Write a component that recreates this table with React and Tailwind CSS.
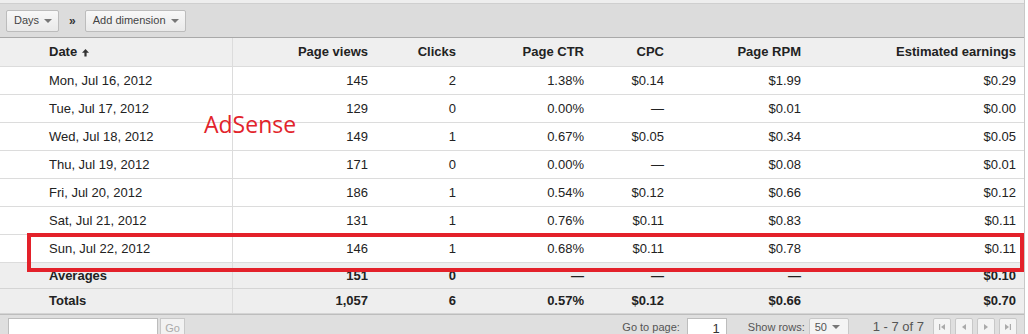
import { useState } from 'react';

const rows = [
  ['Mon, Jul 16, 2012', '145', '2', '1.38%', '$0.14', '$1.99', '$0.29'],
  ['Tue, Jul 17, 2012', '129', '0', '0.00%', '—', '$0.01', '$0.00'],
  ['Wed, Jul 18, 2012', '149', '1', '0.67%', '$0.05', '$0.34', '$0.05'],
  ['Thu, Jul 19, 2012', '171', '0', '0.00%', '—', '$0.08', '$0.01'],
  ['Fri, Jul 20, 2012', '186', '1', '0.54%', '$0.12', '$0.66', '$0.12'],
  ['Sat, Jul 21, 2012', '131', '1', '0.76%', '$0.11', '$0.83', '$0.11'],
  ['Sun, Jul 22, 2012', '146', '1', '0.68%', '$0.11', '$0.78', '$0.11'],
];

const summary = [
  ['Averages', '151', '0', '—', '—', '—', '$0.10', 'h-[26px]'],
  ['Totals', '1,057', '6', '0.57%', '$0.12', '$0.66', '$0.70', 'h-[25px]'],
];

const cols = 'grid grid-cols-[233px_143px_88px_128px_80px_137px_215px]';

function Caret() {
  return <span className="inline-block ml-[5px] w-0 h-0 border-l-[4px] border-r-[4px] border-t-[4px] border-l-transparent border-r-transparent border-t-[#777] align-middle" />;
}

function Cells({ r, bold }) {
  return (
    <>
      <div className="pl-[49px] border-r border-[#dcdcdc] flex items-center">{r[0]}</div>
      {r.slice(1, 7).map((v, i) => (
        <div key={i} className={`flex items-center justify-end pr-[8px] ${bold ? 'font-bold' : ''}`}>{v}</div>
      ))}
    </>
  );
}

function NavBtn({ children }) {
  return (
    <div className="w-[18px] h-[18px] border border-[#c8c8c8] bg-[#f4f4f4] rounded-[2px] flex items-center justify-center">
      {children}
    </div>
  );
}

export default function App() {
  const [page, setPage] = useState('1');

  return (
    <div className="relative w-[1028px] h-[334px] bg-white overflow-hidden text-[13px] text-[#222]" style={{ fontFamily: '"Liberation Sans", Arial, sans-serif' }}>
      <div className="w-[1025px] border-r border-[#c8c8c8]">
        {/* toolbar */}
        <div className="h-[4px] bg-[#eeeeee] border-b border-[#cfcfcf]" />
        <div className="h-[34px] bg-[#dcdcdc] border-b border-[#a9a9a9] flex items-center pl-[6px] text-[11px] text-[#444]">
          <button className="h-[22px] pl-[7px] pr-[6px] flex items-center border border-[#bcbcbc] rounded-[2px] bg-gradient-to-b from-[#f8f8f8] to-[#e9e9e9]">
            Days<Caret />
          </button>
          <span className="ml-[10px] mr-[9px] text-[12px] font-bold text-[#333]">»</span>
          <button className="h-[22px] pl-[7px] pr-[6px] flex items-center border border-[#bcbcbc] rounded-[2px] bg-gradient-to-b from-[#f8f8f8] to-[#e9e9e9]">
            Add dimension<Caret />
          </button>
        </div>

        {/* header */}
        <div className={`${cols} h-[29px] bg-[#efefef] border-b border-[#dcdcdc] font-bold`}>
          <div className="pl-[49px] border-r border-[#dcdcdc] flex items-center">
            Date
            <svg width="9" height="9" viewBox="0 0 9 9" className="ml-[4px] mt-[1px]">
              <path d="M4.5 1 L8 4.8 H5.6 V8.5 H3.4 V4.8 H1 Z" fill="#333" />
            </svg>
          </div>
          {['Page views', 'Clicks', 'Page CTR', 'CPC', 'Page RPM', 'Estimated earnings'].map((h) => (
            <div key={h} className="flex items-center justify-end pr-[8px]">{h}</div>
          ))}
        </div>

        {/* rows */}
        {rows.map((r) => (
          <div key={r[0]} className={`${cols} h-[28px] bg-white border-b border-[#dcdcdc]`}>
            <Cells r={r} />
          </div>
        ))}

        {summary.map((r) => (
          <div key={r[0]} className={`${cols} ${r[7]} bg-[#eeeeee] border-b border-[#d4d4d4] font-bold`}>
            <Cells r={r} bold />
          </div>
        ))}

        {/* footer */}
        <div className="h-[20px] bg-[#dfdfdf] border-t border-[#bdbdbd] flex items-start pt-[3px] pl-[8px] text-[#555] leading-[14px]">
          <input className="w-[150px] h-[20px] bg-white border border-[#bdbdbd] outline-none" />
          <button className="ml-[2px] w-[25px] h-[20px] border border-[#c8c8c8] bg-[#f2f2f2] text-[11px] text-[#aaa] flex items-center justify-center">Go</button>
          <span className="ml-auto text-[11px] mt-[2px]">Go to page:</span>
          <input
            value={page}
            onChange={(e) => setPage(e.target.value)}
            className="ml-[7px] w-[40px] h-[20px] bg-white border border-[#bdbdbd] text-right pr-[6px] text-[13px] text-[#333] outline-none"
          />
          <span className="ml-[21px] text-[11px] mt-[2px]">Show rows:</span>
          <div className="ml-[4px] w-[40px] h-[18px] border border-[#c8c8c8] bg-[#f4f4f4] rounded-[2px] flex items-center pl-[5px] text-[11px]">
            50<Caret />
          </div>
          <span className="ml-[24px] text-[13px] mt-[1px] leading-[16px]">1 - 7 of 7</span>
          <div className="ml-[9px] mr-[7px] flex gap-[4px]">
            <NavBtn>
              <svg width="8" height="8" viewBox="0 0 8 8"><rect x="1" y="1" width="1.2" height="6" fill="#aaa" /><path d="M7 1 L3 4 L7 7 Z" fill="#aaa" /></svg>
            </NavBtn>
            <NavBtn>
              <svg width="8" height="8" viewBox="0 0 8 8"><path d="M6 1 L2 4 L6 7 Z" fill="#aaa" /></svg>
            </NavBtn>
            <NavBtn>
              <svg width="8" height="8" viewBox="0 0 8 8"><path d="M2 1 L6 4 L2 7 Z" fill="#aaa" /></svg>
            </NavBtn>
            <NavBtn>
              <svg width="8" height="8" viewBox="0 0 8 8"><path d="M1 1 L5 4 L1 7 Z" fill="#aaa" /><rect x="5.8" y="1" width="1.2" height="6" fill="#aaa" /></svg>
            </NavBtn>
          </div>
        </div>
      </div>

      {/* annotation overlay */}
      <div className="absolute left-[204px] top-[109px] text-[23px] leading-[30px] text-[#e2232b]" style={{ fontFamily: '"Open Sans", sans-serif' }}>
        AdSense
      </div>
      <div className="absolute left-[27px] top-[233px] w-[997px] h-[39px] border-[4px] border-[#e3212a]" />
    </div>
  );
}
